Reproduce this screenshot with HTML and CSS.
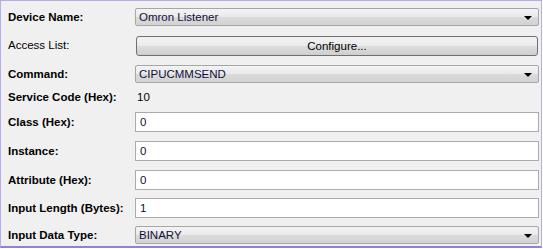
FILE: index.html
```html
<!DOCTYPE html>
<html lang="en">
<head>
    <meta charset="UTF-8">
    <title>Omron Listener</title>
    <link rel="stylesheet" href="styles.css">
</head>
<body>
    <div class="panel">
        <div class="form">
            <label class="label bold">Device Name:</label>
            <div class="select">Omron Listener<span class="caret"></span></div>

            <label class="label">Access List:</label>
            <div class="button">Configure...</div>

            <label class="label bold">Command:</label>
            <div class="select">CIPUCMMSEND<span class="caret"></span></div>

            <label class="label bold short">Service Code (Hex):</label>
            <div class="value short">10</div>

            <label class="label bold tall">Class (Hex):</label>
            <div class="input">0</div>

            <label class="label bold tall">Instance:</label>
            <div class="input">0</div>

            <label class="label bold tall">Attribute (Hex):</label>
            <div class="input">0</div>

            <label class="label bold tall">Input Length (Bytes):</label>
            <div class="input">1</div>

            <label class="label bold">Input Data Type:</label>
            <div class="select">BINARY<span class="caret"></span></div>
        </div>
    </div>
</body>
</html>
```

FILE: styles.css
```css
body {
    margin: 0;
    font-family: 'Liberation Sans', Arial, sans-serif;
    font-size: 11.5px;
    color: #000;
    background: #ffffff;
}

.panel {
    width: 540px;
    height: 245px;
    background: #f0f0f0;
    border: 1px solid #b6ade8;
    border-bottom: 2px solid #8f82de;
}

.form {
    display: grid;
    grid-template-columns: 127px 404px;
    grid-template-rows: 28px 29px 24px 23px 29px 29px 28px 28px 18px;
    padding: 7px 0 0 7px;
    align-items: start;
}

.label {
    height: 18px;
    line-height: 18px;
    white-space: nowrap;
}

.label.short {
    height: 16px;
    line-height: 16px;
}

.label.tall {
    height: 20px;
    line-height: 20px;
}

.bold {
    font-weight: bold;
}

.select {
    position: relative;
    height: 16px;
    line-height: 16px;
    padding-left: 3px;
    border: 1px solid #a7a7a7;
    border-radius: 2px;
    background: linear-gradient(#f4f4f4, #e9e9e9 50%, #dbdbdb 51%, #d2d2d2);
    color: #10103a;
}

.caret {
    position: absolute;
    right: 6px;
    top: 7px;
    width: 0;
    height: 0;
    border-left: 4px solid transparent;
    border-right: 4px solid transparent;
    border-top: 4px solid #000;
}

.button {
    margin: 0 1px;
    height: 18px;
    line-height: 18px;
    text-align: center;
    border: 1px solid #707070;
    border-radius: 3px;
    background: linear-gradient(#f2f2f2, #ebebeb 50%, #dddddd 51%, #cfcfcf);
}

.value {
    padding-left: 2px;
    height: 16px;
    line-height: 16px;
}

.input {
    height: 18px;
    line-height: 18px;
    padding-left: 4px;
    border: 1px solid #ababab;
    background: #ffffff;
    color: #10103a;
}
```
